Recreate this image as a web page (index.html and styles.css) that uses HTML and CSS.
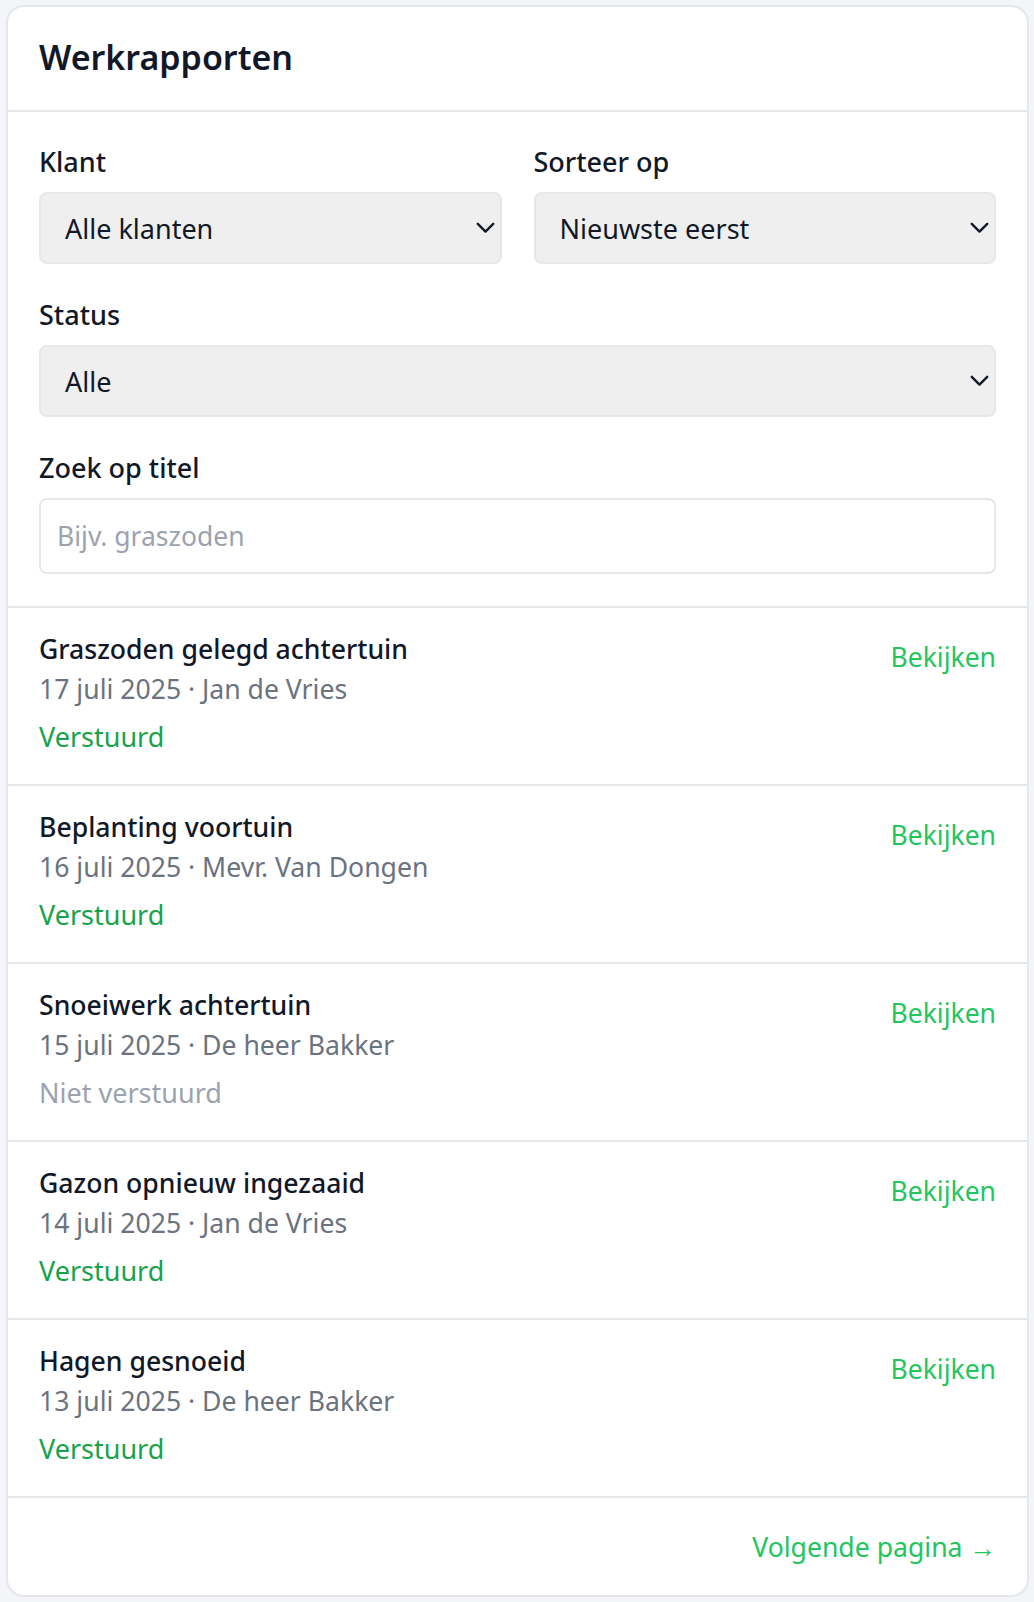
FILE: index.html
```html
<!DOCTYPE html>
<html lang="nl">
<head>
<meta charset="utf-8">
<title>Werkrapporten</title>
<link rel="stylesheet" href="styles.css">
</head>
<body>
<div class="page">
  <div class="card">
    <div class="card-header">
      <h1 class="title">Werkrapporten</h1>
    </div>
    <div class="filters">
      <div class="row-2">
        <div class="field">
          <label class="label">Klant</label>
          <div class="select"><span>Alle klanten</span><svg class="chev" viewBox="0 0 16 10" width="16" height="10"><path d="M1.5 1.5 L8 8 L14.5 1.5" fill="none" stroke="#111827" stroke-width="2" stroke-linecap="round" stroke-linejoin="round"/></svg></div>
        </div>
        <div class="field">
          <label class="label">Sorteer op</label>
          <div class="select"><span>Nieuwste eerst</span><svg class="chev" viewBox="0 0 16 10" width="16" height="10"><path d="M1.5 1.5 L8 8 L14.5 1.5" fill="none" stroke="#111827" stroke-width="2" stroke-linecap="round" stroke-linejoin="round"/></svg></div>
        </div>
      </div>
      <div class="field">
        <label class="label">Status</label>
        <div class="select"><span>Alle</span><svg class="chev" viewBox="0 0 16 10" width="16" height="10"><path d="M1.5 1.5 L8 8 L14.5 1.5" fill="none" stroke="#111827" stroke-width="2" stroke-linecap="round" stroke-linejoin="round"/></svg></div>
      </div>
      <div class="field">
        <label class="label">Zoek op titel</label>
        <div class="input"><span class="placeholder">Bijv. graszoden</span></div>
      </div>
    </div>
    <ul class="list">
      <li class="item">
        <div class="info">
          <div class="item-title">Graszoden gelegd achtertuin</div>
          <div class="meta">17 juli 2025 · Jan de Vries</div>
          <div class="status sent">Verstuurd</div>
        </div>
        <a class="view">Bekijken</a>
      </li>
      <li class="item">
        <div class="info">
          <div class="item-title">Beplanting voortuin</div>
          <div class="meta">16 juli 2025 · Mevr. Van Dongen</div>
          <div class="status sent">Verstuurd</div>
        </div>
        <a class="view">Bekijken</a>
      </li>
      <li class="item">
        <div class="info">
          <div class="item-title">Snoeiwerk achtertuin</div>
          <div class="meta">15 juli 2025 · De heer Bakker</div>
          <div class="status unsent">Niet verstuurd</div>
        </div>
        <a class="view">Bekijken</a>
      </li>
      <li class="item">
        <div class="info">
          <div class="item-title">Gazon opnieuw ingezaaid</div>
          <div class="meta">14 juli 2025 · Jan de Vries</div>
          <div class="status sent">Verstuurd</div>
        </div>
        <a class="view">Bekijken</a>
      </li>
      <li class="item">
        <div class="info">
          <div class="item-title">Hagen gesnoeid</div>
          <div class="meta">13 juli 2025 · De heer Bakker</div>
          <div class="status sent">Verstuurd</div>
        </div>
        <a class="view">Bekijken</a>
      </li>
    </ul>
    <div class="card-footer">
      <a class="next">Volgende pagina →</a>
    </div>
  </div>
</div>
</body>
</html>
```
FILE: styles.css
```css
* { box-sizing: border-box; }
html, body {
  margin: 0;
  padding: 0;
  background: #f3f5f9;
  font-family: "Noto Sans", "Open Sans", sans-serif;
  color: #111827;
}
.page {
  padding: 5px 5px 6px 6px;
}
.card {
  background: #ffffff;
  border: 2px solid #e5e7eb;
  border-radius: 18px;
  overflow: hidden;
}
.card-header {
  height: 105px;
  padding: 0 31px;
  display: flex;
  align-items: center;
  border-bottom: 2px solid #e5e7eb;
}
.title {
  margin: 0 0 4px;
  font-size: 34px;
  font-weight: 600;
  line-height: 40px;
  color: #111827;
}
.filters {
  padding: 34px 31px 32px;
  display: flex;
  flex-direction: column;
  gap: 35px;
  border-bottom: 2px solid #e5e7eb;
}
.row-2 {
  display: grid;
  grid-template-columns: 1fr 1fr;
  gap: 32px;
}
.field {
  display: flex;
  flex-direction: column;
  gap: 14px;
}
.label {
  font-size: 27px;
  font-weight: 500;
  line-height: 32px;
  color: #111827;
}
.select {
  height: 72px;
  background: #efefef;
  border: 2px solid #e5e7eb;
  border-radius: 8px;
  display: flex;
  align-items: center;
  justify-content: space-between;
  padding: 0 5px 0 24px;
  font-size: 27px;
  color: #111827;
}
.chev {
  width: 19px;
  height: 12px;
}
.input {
  height: 76px;
  background: #ffffff;
  border: 2px solid #e5e7eb;
  border-radius: 8px;
  display: flex;
  align-items: center;
  padding: 0 16px;
  font-size: 26.5px;
}
.placeholder {
  color: #9ca3af;
}
.list {
  list-style: none;
  margin: 0;
  padding: 0;
}
.item {
  display: flex;
  justify-content: space-between;
  align-items: flex-start;
  padding: 21px 31px 27px;
  border-bottom: 2px solid #e5e7eb;
}
.info {
  display: flex;
  flex-direction: column;
}
.item-title {
  font-size: 26.6px;
  font-weight: 500;
  line-height: 40px;
  color: #111827;
}
.meta {
  font-size: 26.6px;
  line-height: 40px;
  color: #6b7280;
}
.status {
  margin-top: 8px;
  font-size: 27px;
  font-weight: 400;
  line-height: 40px;
}
.status.sent { color: #16a34a; }
.status.unsent { color: #9ca3af; }
.view {
  margin-top: 8px;
  font-size: 26.5px;
  line-height: 40px;
  color: #22c55e;
  cursor: pointer;
}
.card-footer {
  height: 97px;
  padding: 0 31px;
  display: flex;
  align-items: center;
  justify-content: flex-end;
}
.next {
  font-size: 26.6px;
  line-height: 40px;
  color: #22c55e;
  cursor: pointer;
}
```
